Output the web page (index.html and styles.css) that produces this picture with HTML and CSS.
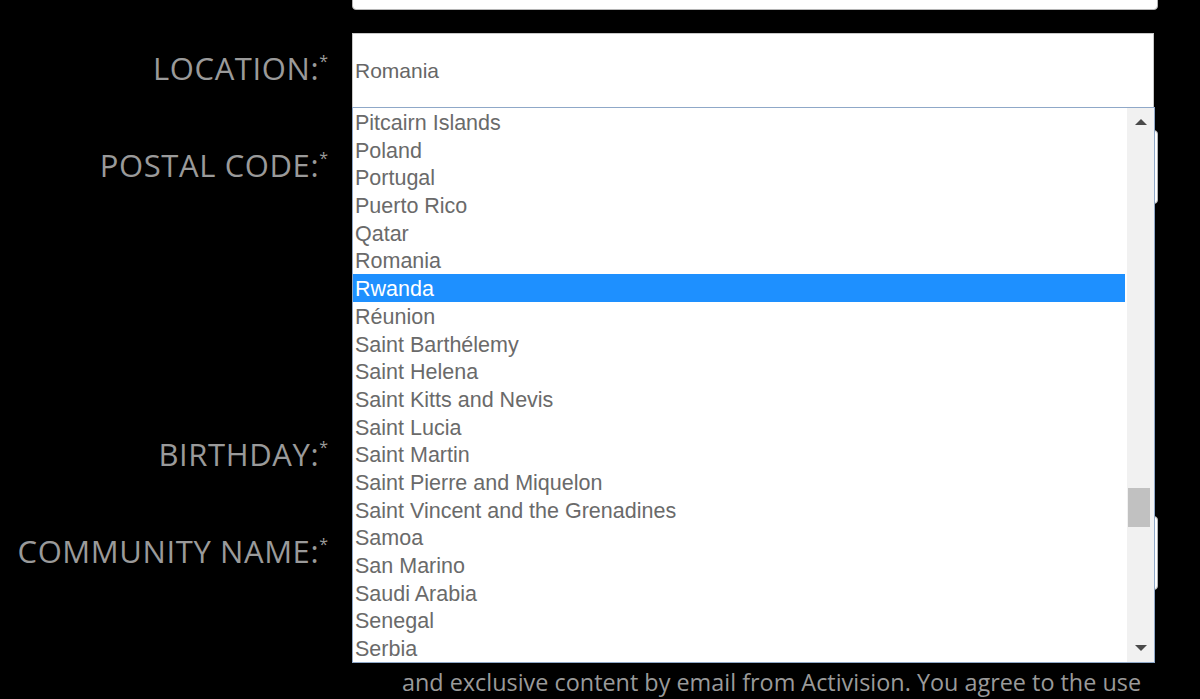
FILE: index.html
```html
<!DOCTYPE html>
<html lang="en">
<head>
<meta charset="utf-8">
<title>Registration</title>
<link rel="stylesheet" href="styles.css">
</head>
<body>
<form class="form">
  <div class="row">
    <div class="label"></div>
    <div class="text-input"></div>
  </div>
  <div class="row">
    <div class="label">LOCATION:<sup>*</sup></div>
    <div class="select-wrap">
      <div class="select">Romania</div>
      <div class="dropdown">
        <ul class="options">
          <li>Pitcairn Islands</li>
          <li>Poland</li>
          <li>Portugal</li>
          <li>Puerto Rico</li>
          <li>Qatar</li>
          <li>Romania</li>
          <li class="selected">Rwanda</li>
          <li>Réunion</li>
          <li>Saint Barthélemy</li>
          <li>Saint Helena</li>
          <li>Saint Kitts and Nevis</li>
          <li>Saint Lucia</li>
          <li>Saint Martin</li>
          <li>Saint Pierre and Miquelon</li>
          <li>Saint Vincent and the Grenadines</li>
          <li>Samoa</li>
          <li>San Marino</li>
          <li>Saudi Arabia</li>
          <li>Senegal</li>
          <li>Serbia</li>
        </ul>
        <div class="scrollbar">
          <div class="arrow arrow-up"></div>
          <div class="track"><div class="thumb"></div></div>
          <div class="arrow arrow-down"></div>
        </div>
      </div>
    </div>
  </div>
  <div class="row">
    <div class="label">POSTAL CODE:<sup>*</sup></div>
    <div class="text-input"></div>
  </div>
  <div class="spacer"></div>
  <div class="row">
    <div class="label">BIRTHDAY:<sup>*</sup></div>
    <div class="birthday"></div>
  </div>
  <div class="row">
    <div class="label">COMMUNITY NAME:<sup>*</sup></div>
    <div class="text-input"></div>
  </div>
  <div class="row">
    <div class="label"></div>
    <p class="consent">and exclusive content by email from Activision. You agree to the use</p>
  </div>
</form>
</body>
</html>
```
FILE: styles.css
```css
html, body {
  margin: 0;
  padding: 0;
  background: #000;
  overflow: hidden;
}

.form {
  margin-top: -64px;
  display: flex;
  flex-direction: column;
  gap: 23px;
}

.row {
  display: grid;
  grid-template-columns: 330px 806px;
  column-gap: 22px;
  align-items: center;
}

.label {
  text-align: right;
  font-family: "Open Sans", "Liberation Sans", sans-serif;
  font-size: 31px;
  font-weight: 500;
  letter-spacing: 0.6px;
  color: #9a9a9a;
  padding-bottom: 5px;
  padding-right: 2px;
  white-space: nowrap;
}

.label sup {
  font-size: 16px;
  vertical-align: top;
  line-height: 1;
  position: relative;
  top: 6px;
  margin-left: 0;
  letter-spacing: 0;
}

.text-input {
  height: 74px;
  box-sizing: border-box;
  background: #fff;
  border: 1px solid #b5b5b5;
  border-radius: 4px;
}

.birthday {
  height: 74px;
  width: 700px;
  background: #fff;
  border-radius: 4px;
}

.spacer {
  height: 169px;
}

.select-wrap {
  position: relative;
  width: 802px;
}

.select {
  height: 74px;
  box-sizing: border-box;
  background: #fff;
  border: 1px solid #c8c8c8;
  border-bottom: none;
  padding-left: 2px;
  font-family: "Liberation Sans", Arial, sans-serif;
  font-size: 21px;
  line-height: 74px;
  color: #666;
}

.dropdown {
  position: absolute;
  top: 74px;
  left: 0;
  width: 803px;
  height: 556px;
  box-sizing: border-box;
  border: 1px solid #8fa8c8;
  background: #fff;
  display: flex;
  z-index: 5;
}

.options {
  list-style: none;
  margin: 0;
  padding: 0;
  width: 772px;
  margin-right: 2px;
}

.options li {
  height: 27.7px;
  line-height: 31px;
  padding-left: 2px;
  font-family: "Liberation Sans", Arial, sans-serif;
  font-size: 21.5px;
  color: #6a6a6a;
  white-space: nowrap;
  overflow: hidden;
}

.options li.selected {
  background: #1e90ff;
  color: #fff;
}

.scrollbar {
  flex: 1;
  background: #f1f1f1;
  display: flex;
  flex-direction: column;
}

.arrow {
  height: 28px;
  display: flex;
  justify-content: center;
  align-items: center;
}

.arrow::before {
  content: "";
  width: 0;
  height: 0;
  border-left: 6px solid transparent;
  border-right: 6px solid transparent;
}

.arrow-up::before {
  border-bottom: 6px solid #4a4a4a;
  margin-left: 1px;
}

.arrow-down::before {
  border-top: 6px solid #4a4a4a;
  margin-left: 1px;
}

.track {
  flex: 1;
  padding-left: 1px;
}

.thumb {
  margin-top: 352px;
  width: 22px;
  height: 39px;
  background: #c1c1c1;
}

.consent {
  margin: 0;
  padding-left: 50px;
  margin-top: 53px;
  font-family: "Open Sans", "Liberation Sans", sans-serif;
  font-size: 23.4px;
  font-weight: 500;
  color: #9a9a9a;
  white-space: nowrap;
  line-height: 32px;
}
```
